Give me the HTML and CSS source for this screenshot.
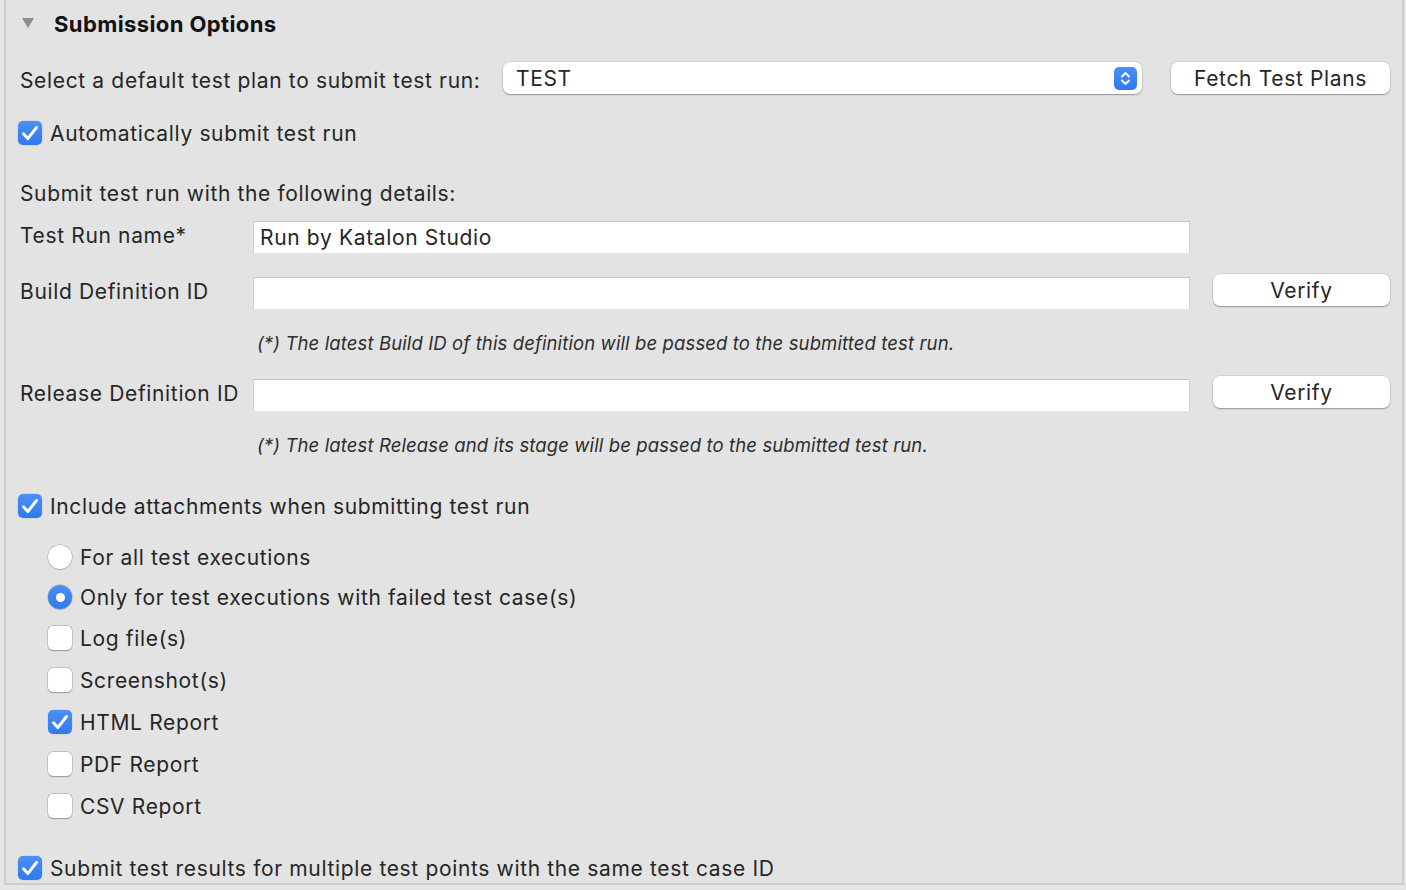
FILE: index.html
```html
<!DOCTYPE html>
<html>
<head>
<meta charset="utf-8">
<link rel="stylesheet" href="styles.css">
</head>
<body>
<div class="panel">
  <div class="header">
    <span class="disclosure"></span>
    <span class="title">Submission Options</span>
  </div>

  <div class="plan-row">
    <span class="plan-label">Select a default test plan to submit test run:</span>
    <div class="select">
      <span class="select-value">TEST</span>
      <span class="stepper">
        <svg width="23" height="23" viewBox="0 0 23 23"><path d="M8 9.5 L11.5 6 L15 9.5" fill="none" stroke="#fff" stroke-width="1.9" stroke-linecap="round" stroke-linejoin="round"/><path d="M8 13.5 L11.5 17 L15 13.5" fill="none" stroke="#fff" stroke-width="1.9" stroke-linecap="round" stroke-linejoin="round"/></svg>
      </span>
    </div>
    <button class="btn fetch">Fetch Test Plans</button>
  </div>

  <label class="check-row auto">
    <span class="cb on"><svg viewBox="0 0 24 24"><path d="M5.5 12.8 L9.8 17.6 L18.5 6.5" fill="none" stroke="#fff" stroke-width="3" stroke-linecap="round" stroke-linejoin="round"/></svg></span>
    <span>Automatically submit test run</span>
  </label>

  <div class="details-title">Submit test run with the following details:</div>

  <div class="field-row first">
    <span class="field-label">Test Run name*</span>
    <div class="input">Run by Katalon Studio</div>
  </div>

  <div class="field-row with-btn build">
    <span class="field-label">Build Definition ID</span>
    <div class="input"></div>
    <button class="btn verify">Verify</button>
  </div>
  <div class="note">(*) The latest Build ID of this definition will be passed to the submitted test run.</div>

  <div class="field-row with-btn release">
    <span class="field-label">Release Definition ID</span>
    <div class="input"></div>
    <button class="btn verify">Verify</button>
  </div>
  <div class="note">(*) The latest Release and its stage will be passed to the submitted test run.</div>

  <label class="check-row include">
    <span class="cb on"><svg viewBox="0 0 24 24"><path d="M5.5 12.8 L9.8 17.6 L18.5 6.5" fill="none" stroke="#fff" stroke-width="3" stroke-linecap="round" stroke-linejoin="round"/></svg></span>
    <span>Include attachments when submitting test run</span>
  </label>

  <div class="sub-options">
    <label class="check-row sub r1"><span class="radio"></span><span>For all test executions</span></label>
    <label class="check-row sub r2"><span class="radio on"></span><span>Only for test executions with failed test case(s)</span></label>
    <label class="check-row sub c1"><span class="cb"></span><span>Log file(s)</span></label>
    <label class="check-row sub c2"><span class="cb"></span><span>Screenshot(s)</span></label>
    <label class="check-row sub c2"><span class="cb on"><svg viewBox="0 0 24 24"><path d="M5.5 12.8 L9.8 17.6 L18.5 6.5" fill="none" stroke="#fff" stroke-width="3" stroke-linecap="round" stroke-linejoin="round"/></svg></span><span>HTML Report</span></label>
    <label class="check-row sub c2"><span class="cb"></span><span>PDF Report</span></label>
    <label class="check-row sub c2"><span class="cb"></span><span>CSV Report</span></label>
  </div>

  <label class="check-row last">
    <span class="cb on"><svg viewBox="0 0 24 24"><path d="M5.5 12.8 L9.8 17.6 L18.5 6.5" fill="none" stroke="#fff" stroke-width="3" stroke-linecap="round" stroke-linejoin="round"/></svg></span>
    <span>Submit test results for multiple test points with the same test case ID</span>
  </label>
</div>
</body>
</html>
```

FILE: styles.css
```css
* { box-sizing: border-box; }
html, body {
  margin: 0;
  padding: 0;
  background: #e6e6e6;
}
body {
  font-family: "Inter", "Liberation Sans", sans-serif;
  font-size: 21px;
  letter-spacing: 0.65px;
  color: #262626;
  width: 1406px;
  height: 890px;
  overflow: hidden;
}
.panel {
  margin-left: 4px;
  width: 1400px;
  background: #e3e3e3;
  border-left: 2px solid #cdcdcd;
  border-right: 2px solid #cdcdcd;
  border-bottom: 2px solid #cdcdcd;
  padding-left: 14px;
  padding-right: 12px;
}
.header {
  height: 48px;
  display: flex;
  align-items: center;
}
.disclosure {
  width: 0;
  height: 0;
  margin-left: 2px;
  margin-top: -2px;
  border-left: 6px solid transparent;
  border-right: 6px solid transparent;
  border-top: 10px solid #8c8c8c;
}
.title {
  margin-left: 20px;
  font-weight: 700;
  font-size: 22px;
  letter-spacing: 0.4px;
  color: #111;
}
.plan-row {
  margin-top: 12px;
  height: 36px;
  display: flex;
  align-items: center;
}
.plan-label {
  width: 483px;
  flex: none;
  padding-top: 4px;
  white-space: nowrap;
}
.select {
  width: 639px;
  flex: none;
  height: 32px;
  background: #fff;
  border-radius: 7px;
  box-shadow: 0 0 0 0.5px rgba(0,0,0,0.12), 0 1px 1.5px rgba(0,0,0,0.3);
  display: flex;
  align-items: center;
  justify-content: space-between;
  padding-left: 13px;
  padding-right: 5px;
}
.stepper {
  width: 23px;
  height: 23px;
  border-radius: 5px;
  background: linear-gradient(#4a90f7, #2f78f0);
  display: block;
}
.stepper svg { display: block; }
.btn {
  font-family: inherit;
  font-size: 21px;
  letter-spacing: 0.65px;
  color: #262626;
  background: #fff;
  border: none;
  border-radius: 7px;
  box-shadow: 0 0 0 0.5px rgba(0,0,0,0.12), 0 1px 1.5px rgba(0,0,0,0.3);
  height: 32px;
  padding: 0;
  flex: none;
}
.fetch {
  margin-left: 29px;
  width: 219px;
}
.check-row {
  display: flex;
  align-items: center;
  height: 30px;
  white-space: nowrap;
}
.cb {
  width: 24px;
  height: 24px;
  border-radius: 5px;
  background: #fff;
  box-shadow: 0 0 0 0.5px rgba(0,0,0,0.2), 0 0.5px 1.5px rgba(0,0,0,0.25);
  margin-left: -2px;
  margin-right: 8px;
  flex: none;
}
.cb.on {
  background: linear-gradient(#4a90f7, #2f78f0);
  box-shadow: 0 0 0 0.5px rgba(0,0,0,0.1);
}
.cb svg { display: block; width: 24px; height: 24px; }
.radio {
  width: 24px;
  height: 24px;
  border-radius: 50%;
  background: #fff;
  box-shadow: 0 0 0 0.5px rgba(0,0,0,0.2), 0 0.5px 1.5px rgba(0,0,0,0.25);
  margin-left: -2px;
  margin-right: 8px;
  flex: none;
  display: flex;
  align-items: center;
  justify-content: center;
}
.radio.on {
  background: linear-gradient(#4a90f7, #2f78f0);
}
.radio.on::after {
  content: "";
  width: 9px;
  height: 9px;
  border-radius: 50%;
  background: #fff;
}
.auto { margin-top: 22px; }
.details-title {
  margin-top: 31px;
  height: 30px;
  line-height: 30px;
}
.field-row {
  display: flex;
  align-items: flex-start;
}
.field-label {
  width: 233px;
  flex: none;
  line-height: 30px;
  white-space: nowrap;
}
.field-row.first { margin-top: 12px; height: 33px; }
.input {
  width: 937px;
  height: 33px;
  background: #fff;
  border: 1px solid #d2d2d2;
  border-top-color: #c4c4c4;
  border-bottom-color: #e6e6e6;
  padding-left: 6px;
  line-height: 31px;
  flex: none;
}
.field-row.with-btn { height: 36px; }
.field-row.with-btn .field-label { line-height: 36px; }
.field-row.with-btn .input { margin-top: 3px; }
.field-row.build { margin-top: 20px; }
.field-row.release { margin-top: 18px; }
.verify {
  margin-left: 23px;
  width: 177px;
}
.note {
  margin-top: 18px;
  height: 30px;
  line-height: 30px;
  padding-left: 237px;
  font-style: italic;
  font-size: 18.5px;
  letter-spacing: 0.12px;
  color: #2e2e2e;
  white-space: nowrap;
}
.include { margin-top: 31px; }
.sub-options { padding-left: 30px; }
.sub.r1 { margin-top: 21px; }
.sub.r2 { margin-top: 10px; }
.sub.c1 { margin-top: 11px; }
.sub.c2 { margin-top: 12px; }
.last { margin-top: 32px; }
```
